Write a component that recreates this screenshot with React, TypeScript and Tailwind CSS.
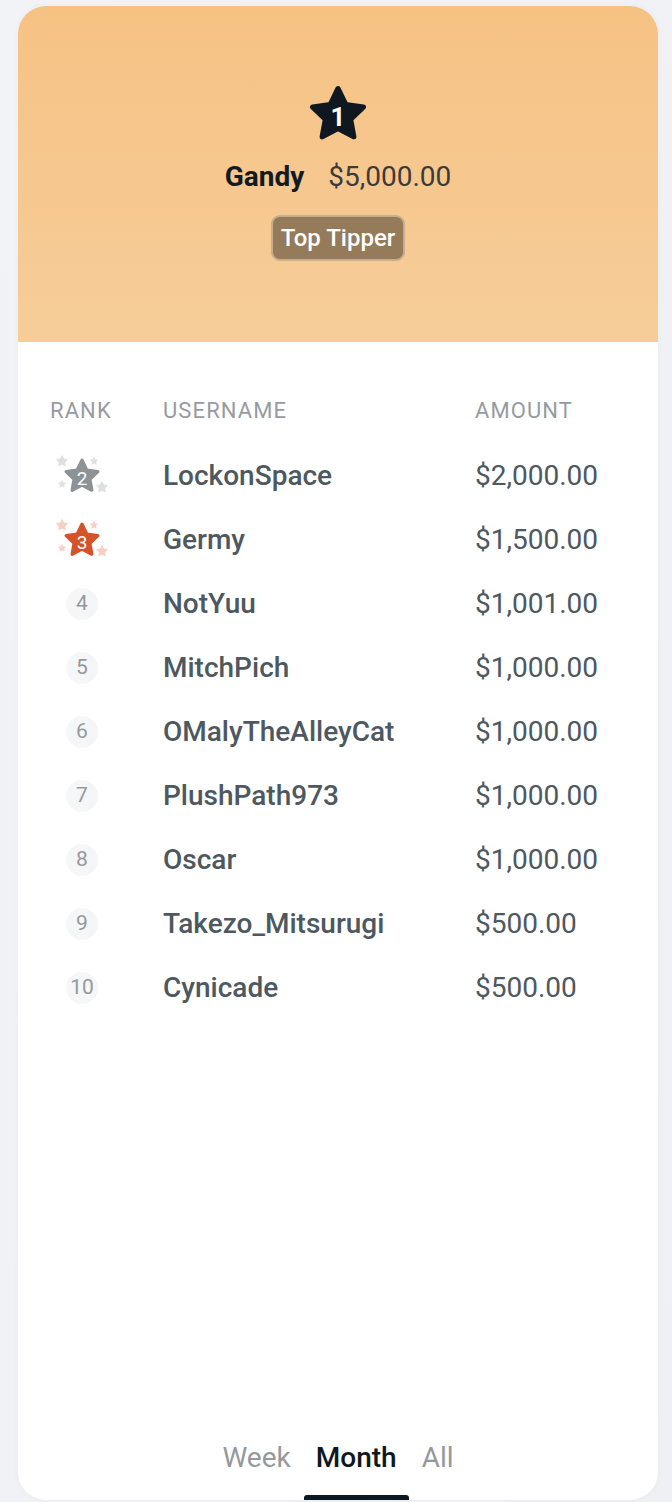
import React from 'react'

const STAR = 'M12 2.5l2.9 6 6.6.9-4.8 4.6 1.2 6.5L12 17.4l-5.9 3.1 1.2-6.5L2.5 9.4l6.6-.9z'

function Star({ size, color, label, labelClass }: { size: number; color: string; label: string; labelClass: string }) {
  return (
    <div className="relative flex items-center justify-center" style={{ width: size, height: size }}>
      <svg viewBox="0 0 24 24" width={size} height={size} className="absolute inset-0">
        <path d={STAR} fill={color} stroke={color} strokeWidth="2" strokeLinejoin="round" />
      </svg>
      <span className={`relative ${labelClass}`}>{label}</span>
    </div>
  )
}

function Sparkles({ color }: { color: string }) {
  const pts = [
    { x: 12, y: 9, s: 13 },
    { x: 44, y: 9, s: 9 },
    { x: 12, y: 32, s: 9 },
    { x: 52, y: 35, s: 13 },
  ]
  return (
    <svg viewBox="0 0 64 48" width="64" height="48" className="absolute inset-0">
      {pts.map((p, i) => (
        <path
          key={i}
          d={STAR}
          fill={color}
          stroke={color}
          strokeWidth="2"
          strokeLinejoin="round"
          transform={`translate(${p.x - p.s / 2} ${p.y - p.s / 2}) scale(${p.s / 24})`}
        />
      ))}
    </svg>
  )
}

function Medal({ rank }: { rank: number }) {
  const silver = rank === 2
  return (
    <div className="relative w-[64px] h-[48px] flex items-center justify-center">
      <Sparkles color={silver ? '#dddfe0' : '#f5d0c5'} />
      <div className="relative">
        <Star
          size={40}
          color={silver ? '#8d9296' : '#d4532a'}
          label={String(rank)}
          labelClass="text-[19px] leading-none text-white mt-[4px]"
        />
      </div>
    </div>
  )
}

const rows = [
  { rank: 2, name: 'LockonSpace', amount: '$2,000.00' },
  { rank: 3, name: 'Germy', amount: '$1,500.00' },
  { rank: 4, name: 'NotYuu', amount: '$1,001.00' },
  { rank: 5, name: 'MitchPich', amount: '$1,000.00' },
  { rank: 6, name: 'OMalyTheAlleyCat', amount: '$1,000.00' },
  { rank: 7, name: 'PlushPath973', amount: '$1,000.00' },
  { rank: 8, name: 'Oscar', amount: '$1,000.00' },
  { rank: 9, name: 'Takezo_Mitsurugi', amount: '$500.00' },
  { rank: 10, name: 'Cynicade', amount: '$500.00' },
]

export default function App() {
  return (
    <div className="min-h-[1502px] bg-gradient-to-br from-[#f1f3f6] to-[#eef0f4] pt-[6px] pl-[18px] font-['Roboto',sans-serif]">
      <div className="w-[640px] h-[1494px] bg-white rounded-[28px] overflow-hidden flex flex-col shadow-[0_0_6px_rgba(0,0,0,0.03)]">
        {/* Header */}
        <div className="h-[336px] shrink-0 bg-gradient-to-b from-[#f6c284] to-[#f6cd99] flex flex-col items-center pt-[76px]">
          <Star size={64} color="#0f1820" label="1" labelClass="text-[26px] font-bold leading-none text-white mt-[5px]" />
          <div className="flex items-baseline gap-[24px] mt-[14px] text-[28px] leading-[34px]">
            <span className="font-bold text-[#121a21]">Gandy</span>
            <span className="text-[#3b3b3b]">$5,000.00</span>
          </div>
          <div className="mt-[21px] h-[46px] px-[8px] flex items-center rounded-[9px] bg-[#957b59] border-2 border-[#c5ad8e] text-white text-[24px] font-medium">
            Top Tipper
          </div>
        </div>

        {/* Table */}
        <div className="flex-1 px-[32px] pt-[54px]">
          <div className="flex items-center h-[28px] text-[22px] tracking-[0.05em] text-[#979b9f] uppercase">
            <div className="w-[113px]">Rank</div>
            <div className="w-[312px]">Username</div>
            <div>Amount</div>
          </div>
          <div className="mt-[20px] flex flex-col">
            {rows.map((r) => (
              <div key={r.rank} className="flex items-center h-[64px]">
                <div className="w-[113px] flex">
                  {r.rank <= 3 ? (
                    <Medal rank={r.rank} />
                  ) : (
                    <div className="ml-[16px] w-[32px] h-[32px] rounded-full bg-[#f4f6f8] flex items-center justify-center text-[21px] text-[#96999c]">
                      {r.rank}
                    </div>
                  )}
                </div>
                <div className="w-[312px] text-[28px] font-medium text-[#4d5860]">{r.name}</div>
                <div className="text-[28px] text-[#4d5860]">{r.amount}</div>
              </div>
            ))}
          </div>
        </div>

        {/* Tabs */}
        <div className="shrink-0 flex justify-center items-end gap-[13px] text-[28px]">
          <div className="pb-[21px] text-[#95999c]">Week</div>
          <div className="flex flex-col items-center">
            <div className="pb-[16px] font-medium text-[#0f1820]">Month</div>
            <div className="w-[105px] h-[5px] rounded-t-[3px] bg-[#0f1820]" />
          </div>
          <div className="pb-[21px] text-[#95999c]">All</div>
        </div>
      </div>
    </div>
  )
}
